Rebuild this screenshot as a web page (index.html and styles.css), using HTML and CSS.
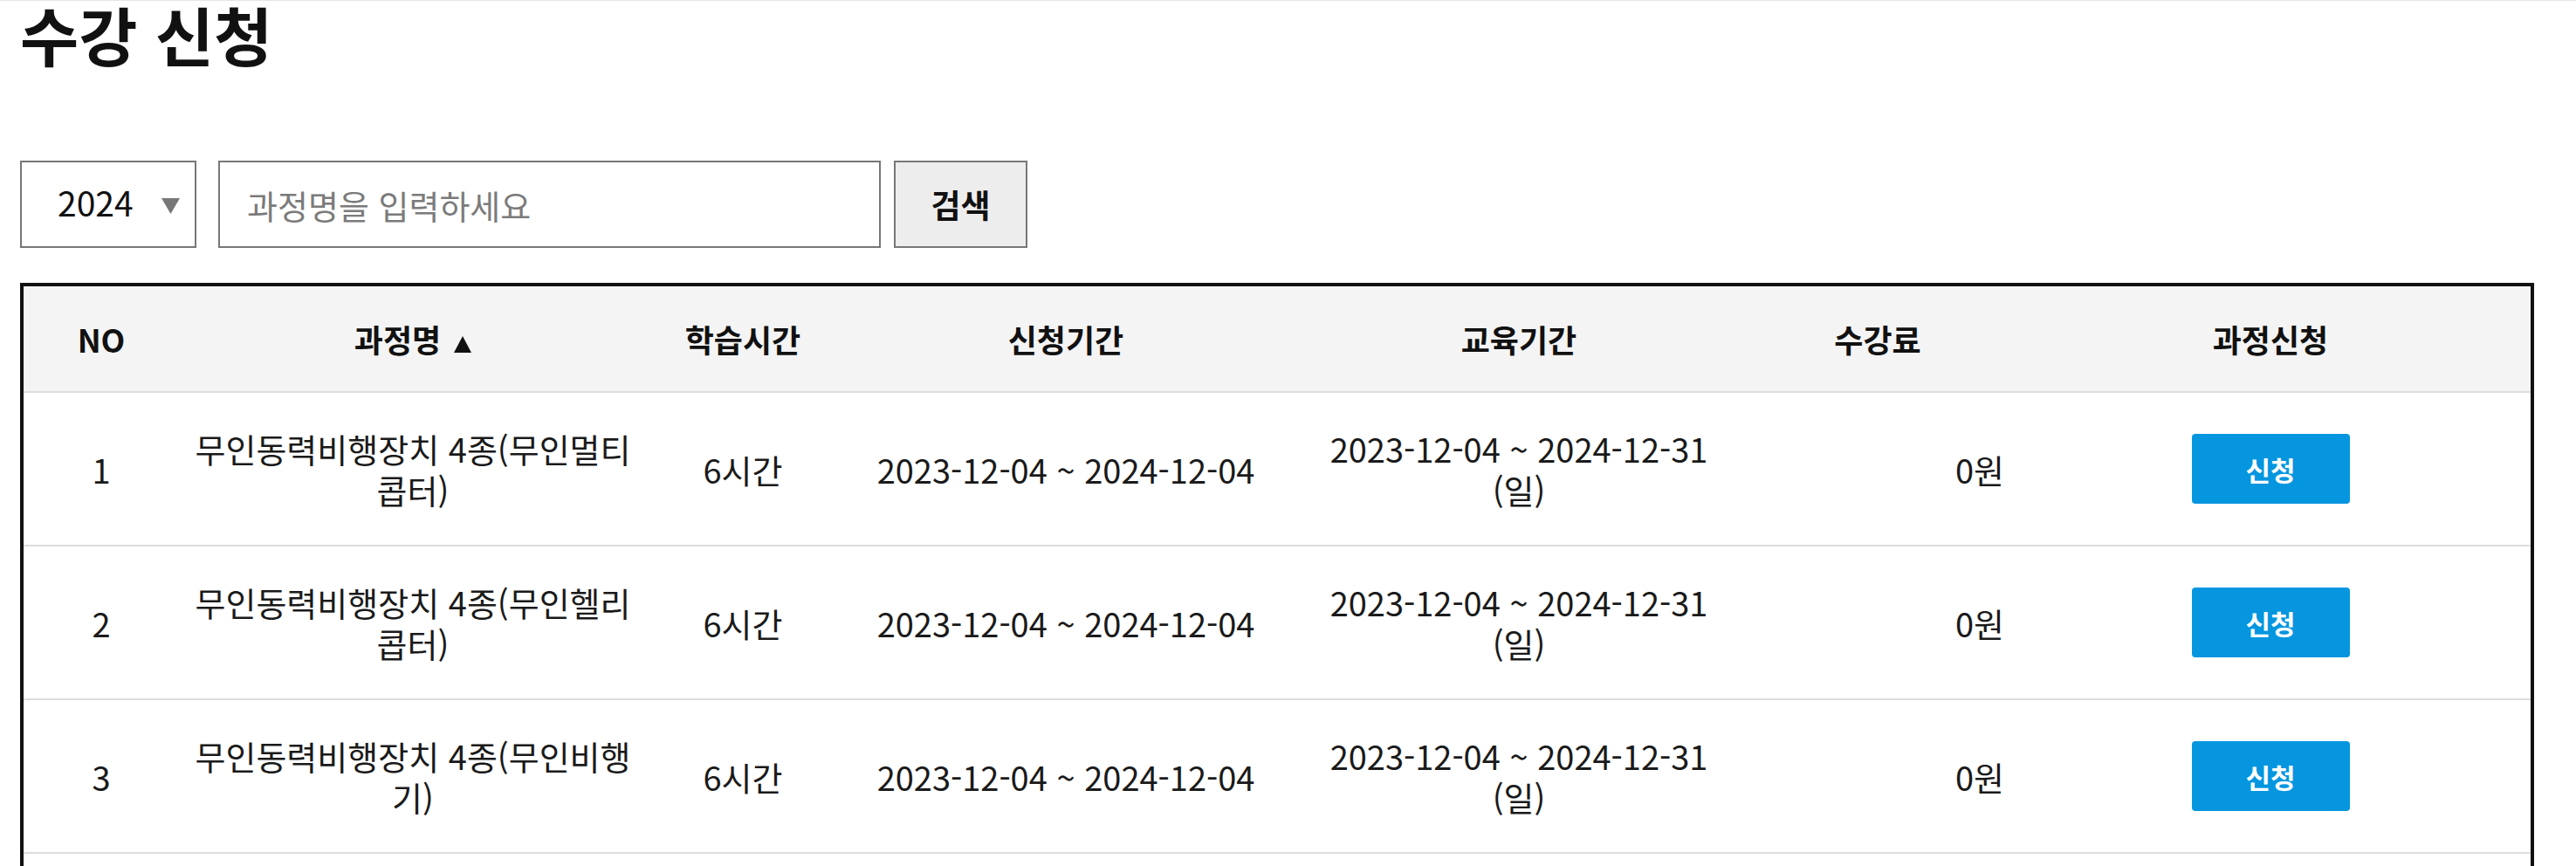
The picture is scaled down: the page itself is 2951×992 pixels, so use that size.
FILE: index.html
```html
<!DOCTYPE html>
<html lang="ko">
<head>
	<meta charset="UTF-8">
	<meta name="viewport" content="width=device-width, initial-scale=1.0">
	<title>수강 신청</title>
	<link rel="stylesheet" href="styles.css">
</head>
<body>
	<div class="container">
		<h1 class="page-title">수강 신청</h1>

		<form class="search-bar">
			<div class="year-select">
				<select class="year" name="year">
					<option>2024</option>
					<option>2023</option>
				</select>
				<svg class="year-arrow" width="21" height="18" viewBox="0 0 21 18"><path d="M0 0h21L10.5 18z" fill="#777"/></svg>
			</div>
			<input class="keyword" type="text" placeholder="과정명을 입력하세요">
			<button class="search-btn" type="button">검색</button>
		</form>

		<div class="table-wrap">
			<table class="course-table">
				<colgroup>
					<col style="width: 178px">
					<col style="width: 536px">
					<col style="width: 220px">
					<col style="width: 520px">
					<col style="width: 518px">
					<col style="width: 304px">
					<col style="width: 596px">
				</colgroup>
				<thead>
					<tr>
						<th>NO</th>
						<th>과정명<svg class="sort-arrow" width="20" height="19" viewBox="0 0 20 19"><path d="M10 0L20 19H0z" fill="#111"/></svg></th>
						<th>학습시간</th>
						<th>신청기간</th>
						<th>교육기간</th>
						<th>수강료</th>
						<th>과정신청</th>
					</tr>
				</thead>
				<tbody>
					<tr>
						<td>1</td>
						<td>무인동력비행장치 4종(무인멀티콥터)</td>
						<td>6시간</td>
						<td>2023-12-04 ~ 2024-12-04</td>
						<td class="edu">2023-12-04 ~ 2024-12-31 (일)</td>
						<td class="fee">0원</td>
						<td><button class="apply-btn" type="button">신청</button></td>
					</tr>
					<tr>
						<td>2</td>
						<td>무인동력비행장치 4종(무인헬리콥터)</td>
						<td>6시간</td>
						<td>2023-12-04 ~ 2024-12-04</td>
						<td class="edu">2023-12-04 ~ 2024-12-31 (일)</td>
						<td class="fee">0원</td>
						<td><button class="apply-btn" type="button">신청</button></td>
					</tr>
					<tr>
						<td>3</td>
						<td>무인동력비행장치 4종(무인비행기)</td>
						<td>6시간</td>
						<td>2023-12-04 ~ 2024-12-04</td>
						<td class="edu">2023-12-04 ~ 2024-12-31 (일)</td>
						<td class="fee">0원</td>
						<td><button class="apply-btn" type="button">신청</button></td>
					</tr>
					<tr>
						<td>4</td>
						<td>무인동력비행장치 4종(무인비행선)</td>
						<td>6시간</td>
						<td>2023-12-04 ~ 2024-12-04</td>
						<td class="edu">2023-12-04 ~ 2024-12-31 (일)</td>
						<td class="fee">0원</td>
						<td><button class="apply-btn" type="button">신청</button></td>
					</tr>
				</tbody>
			</table>
		</div>
	</div>
</body>
</html>
```

FILE: styles.css
```css
body {
	margin: 0;
	border-top: 1px solid #e6e6e6; /* thin line under the site header */
	font-family: "Noto Sans CJK KR", "Noto Sans", sans-serif;
	color: #111;
	background: #fff;
}

.container {
	padding: 0 48px 0 23px;
}

.page-title {
	margin: 1px 0 109px;
	font-size: 73px;
	line-height: 73px;
	font-weight: 700;
	color: #111;
}

/* search row */
.search-bar {
	display: flex;
	align-items: stretch;
	height: 100px;
	margin-bottom: 40px;
}

.year-select {
	position: relative;
	width: 202px;
	margin-right: 25px;
}

.year {
	appearance: none;
	width: 100%;
	height: 100%;
	padding: 0 0 6px 41px;
	border: 2px solid #777;
	border-radius: 0;
	background: #fff;
	font-family: inherit;
	font-size: 39px;
	color: #111;
}

.year-arrow {
	position: absolute;
	top: 43px;
	left: 162px;
	pointer-events: none;
}

.keyword {
	width: 759px;
	box-sizing: border-box;
	padding: 0 0 0 31px;
	border: 2px solid #777;
	font-family: inherit;
	font-size: 38px;
	color: #111;
}

.keyword::placeholder {
	color: #7b7b7b;
}

.search-btn {
	width: 153px;
	margin-left: 15px;
	border: 2px solid #777;
	background: #ededed;
	font-family: inherit;
	font-size: 37px;
	font-weight: 700;
	color: #111;
}

/* course table */
.table-wrap {
	border: 4px solid #111;
}

.course-table {
	width: 100%;
	table-layout: fixed;
	border-collapse: collapse;
}

.course-table th {
	height: 120px;
	padding: 0;
	background: #f4f4f4;
	border-bottom: 2px solid #ddd;
	font-size: 36px;
	font-weight: 700;
	line-height: 47px;
	text-align: center;
}

.sort-arrow {
	margin-left: 15px;
}

.course-table td {
	height: 174px;
	padding: 0 16px;
	border-bottom: 2px solid #ddd;
	font-size: 38px;
	line-height: 47px;
	text-align: center;
	color: #1a1a1a;
}

.course-table td.edu {
	padding: 0 24px;
}

.course-table td.fee {
	padding-right: 7px;
	text-align: right;
}

.apply-btn {
	width: 181px;
	height: 80px;
	border: none;
	border-radius: 4px;
	background: #0596df;
	font-family: inherit;
	font-size: 31px;
	font-weight: 700;
	color: #fff;
	cursor: pointer;
}
```
